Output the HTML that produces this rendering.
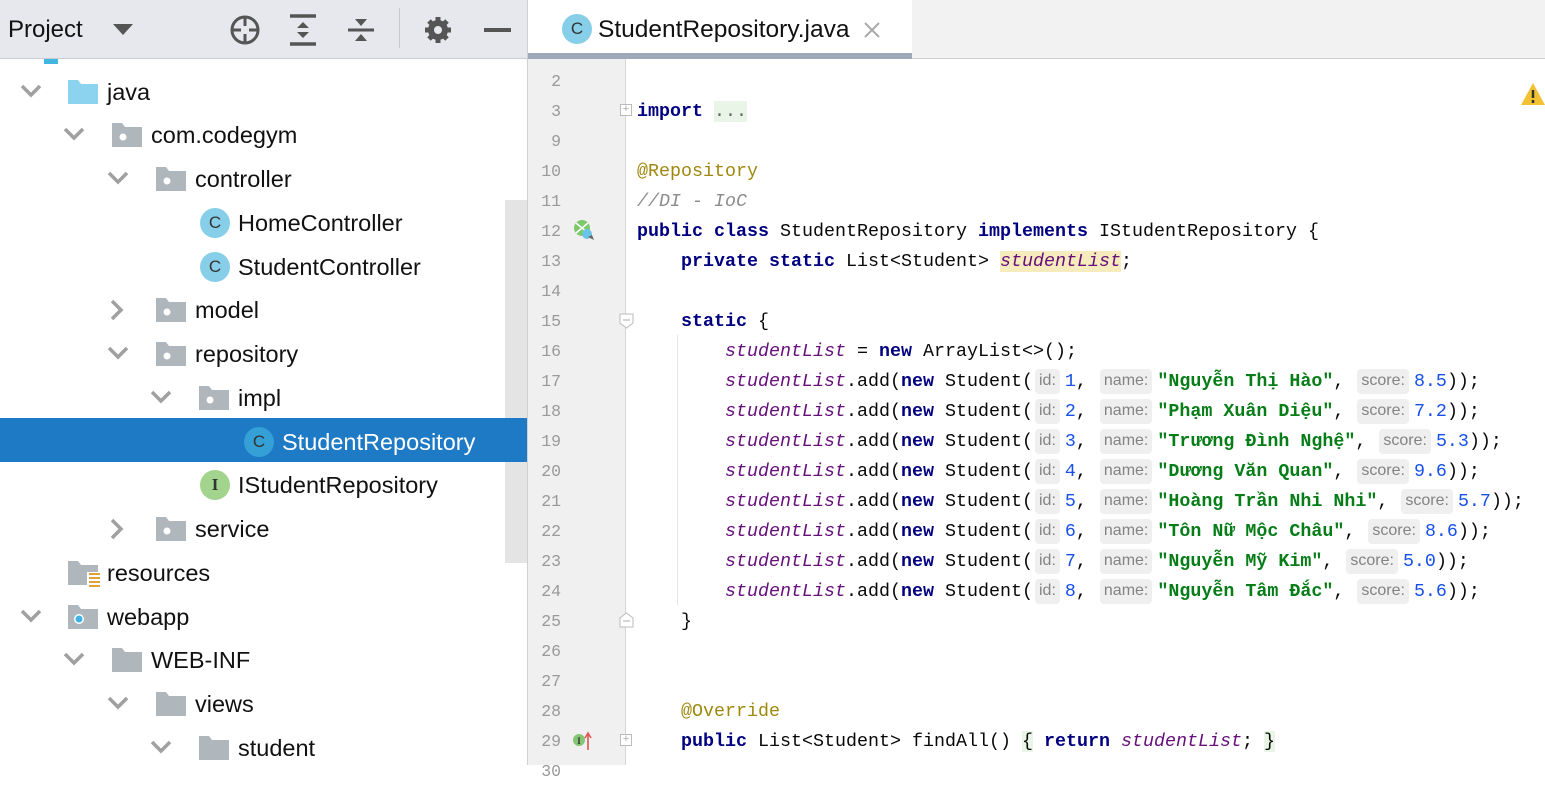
<!DOCTYPE html>
<html><head><meta charset="utf-8"><style>
*{margin:0;padding:0;box-sizing:border-box}
body{width:1545px;height:765px;overflow:hidden;background:#fff;position:relative;font-family:"Liberation Sans",sans-serif}
.abs{position:absolute}
#lh{left:0;top:0;width:528px;height:59px;background:#e6e8ee;border-bottom:1px solid #c9ccd3}
#lh .t{left:8px;top:16px;font-size:24px;color:#111}
.row{position:absolute;left:0;width:528px;height:44px;font-size:23.5px;color:#111;white-space:nowrap}
.row span.tx{position:absolute;top:9px}
.chev{position:absolute;top:14px}
.fold{position:absolute;top:10px;width:30px;height:24px}
.ci{position:absolute;top:7px;width:30px;height:30px;border-radius:50%;background:#87cfe9;color:#333;font-size:17px;text-align:center;line-height:30px;font-family:"Liberation Sans",sans-serif}
#tb{left:528px;top:0;width:1017px;height:59px;background:#f2f2f2;border-bottom:1px solid #d0d0d0}
#tab{left:528px;top:0;width:384px;height:59px;background:#fff;border-bottom:6px solid #9ea8b8}
#gut{left:528px;top:59px;width:98px;height:706px;background:#f0f0f0;border-right:1px solid #d6d6d6}
.ln{position:absolute;left:528px;width:33px;text-align:right;font-family:"Liberation Mono",monospace;font-size:16.5px;color:#999;height:30px;line-height:30px;margin-top:2px}
.cl{position:absolute;left:637px;height:30px;line-height:30px;font-family:"Liberation Mono",monospace;font-size:18.33px;color:#080808;white-space:pre;margin-top:2px}
.k{color:#000080;font-weight:bold}
.f{color:#660e7a;font-style:italic}
.s{color:#067d17;font-weight:bold}
.n{color:#1750eb}
.a{color:#9e880d}
.c{color:#8c8c8c;font-style:italic}
.h{display:inline-block;font-family:"Liberation Sans",sans-serif;font-size:16px;color:#838383;background:#efefef;border-radius:4px;padding:0 4px;line-height:24px;height:25px;vertical-align:1px;font-style:normal;font-weight:normal;margin-right:5px;margin-left:2px}
</style></head><body>
<div id="lh" class="abs"><div class="t abs">Project</div>
<svg class="abs" style="left:112px;top:22px" width="22" height="14"><path d="M1 2h20l-10 11z" fill="#555"/></svg>
<svg class="abs" style="left:229px;top:14px" width="34" height="34"><circle cx="16" cy="16" r="13" fill="none" stroke="#555" stroke-width="3"/><path d="M16 3v9M16 20v9M3 16h9M20 16h9" stroke="#555" stroke-width="3"/></svg>
<svg class="abs" style="left:288px;top:14px" width="30" height="32"><path d="M2 2h26M2 30h26" stroke="#555" stroke-width="3.5"/><path d="M9 14l6-6 6 6zM9 18l6 6 6-6z" fill="#555"/></svg>
<svg class="abs" style="left:346px;top:14px" width="30" height="32"><path d="M2 16h26" stroke="#555" stroke-width="3"/><path d="M9 5l6 7 6-7zM9 27l6-7 6 7z" fill="#555"/></svg>
<div class="abs" style="left:399px;top:8px;width:1px;height:40px;background:#c8c8c8"></div>
<svg class="abs" style="left:423px;top:15px" width="30" height="30" viewBox="0 0 30 30"><g fill="#555"><circle cx="15" cy="15" r="10"/><g stroke="#555" stroke-width="5"><path d="M15 2v26M2 15h26M6 6l18 18M24 6L6 24"/></g></g><circle cx="15" cy="15" r="4" fill="#e6e8ee"/></svg>
<div class="abs" style="left:484px;top:28px;width:27px;height:4px;background:#555"></div>
</div>
<div class="abs" style="left:44px;top:59px;width:14px;height:5px;background:#40b6e0"></div>

<div class="abs" style="left:505px;top:200px;width:22px;height:363px;background:#e4e4e4"></div>
<div class="row" style="top:418px;background:#1e7ac5;width:528px"></div>

<svg width="0" height="0" style="position:absolute"><defs>
<symbol id="dn" viewBox="0 0 22 14"><path d="M2 2l9 9 9-9" fill="none" stroke="#a0a0a0" stroke-width="3.5"/></symbol>
<symbol id="rt" viewBox="0 0 14 22"><path d="M2 2l9 9-9 9" fill="none" stroke="#a0a0a0" stroke-width="3.5"/></symbol>
<symbol id="pk" viewBox="0 0 30 24"><path d="M0 0h10l3 4h17v20H0z" fill="#afb6bc"/><circle cx="11" cy="14" r="3.5" fill="#fff"/></symbol>
<symbol id="fd" viewBox="0 0 30 24"><path d="M0 0h10l3 4h17v20H0z" fill="#afb6bc"/></symbol>
</defs></svg>

<div class="row" style="top:70px"><svg class="chev" style="left:20px" width="22" height="14"><use href="#dn"/></svg><svg class="fold" style="left:68px"><path d="M0 0h10l3 4h17v20H0z" fill="#8cd3ef"/></svg><span class="tx" style="left:107px">java</span></div>
<div class="row" style="top:113px"><svg class="chev" style="left:63px" width="22" height="14"><use href="#dn"/></svg><svg class="fold" style="left:112px"><use href="#pk"/></svg><span class="tx" style="left:151px">com.codegym</span></div>
<div class="row" style="top:157px"><svg class="chev" style="left:107px" width="22" height="14"><use href="#dn"/></svg><svg class="fold" style="left:156px"><use href="#pk"/></svg><span class="tx" style="left:195px">controller</span></div>
<div class="row" style="top:201px"><div class="ci" style="left:200px">C</div><span class="tx" style="left:238px">HomeController</span></div>
<div class="row" style="top:245px"><div class="ci" style="left:200px">C</div><span class="tx" style="left:238px">StudentController</span></div>
<div class="row" style="top:288px"><svg class="chev" style="left:110px;top:11px" width="14" height="22"><use href="#rt"/></svg><svg class="fold" style="left:156px"><use href="#pk"/></svg><span class="tx" style="left:195px">model</span></div>
<div class="row" style="top:332px"><svg class="chev" style="left:107px" width="22" height="14"><use href="#dn"/></svg><svg class="fold" style="left:156px"><use href="#pk"/></svg><span class="tx" style="left:195px">repository</span></div>
<div class="row" style="top:376px"><svg class="chev" style="left:150px" width="22" height="14"><use href="#dn"/></svg><svg class="fold" style="left:199px"><use href="#pk"/></svg><span class="tx" style="left:238px">impl</span></div>
<div class="row" style="top:420px;color:#fff"><div class="ci" style="left:244px;background:#34a0d6">C</div><span class="tx" style="left:282px">StudentRepository</span></div>
<div class="row" style="top:463px"><div class="ci" style="left:200px;background:#a2d48e;font-family:'Liberation Serif',serif;font-weight:bold">I</div><span class="tx" style="left:238px">IStudentRepository</span></div>
<div class="row" style="top:507px"><svg class="chev" style="left:110px;top:11px" width="14" height="22"><use href="#rt"/></svg><svg class="fold" style="left:156px"><use href="#pk"/></svg><span class="tx" style="left:195px">service</span></div>
<div class="row" style="top:551px"><svg class="fold" style="left:68px;width:34px;height:30px"><path d="M0 0h10l3 4h17v20H0z" fill="#afb6bc"/><rect x="19" y="11" width="13" height="17" fill="#fff"/><path d="M21 13h11M21 17h11M21 21h11M21 25h11" stroke="#e0a03a" stroke-width="2"/></svg><span class="tx" style="left:107px">resources</span></div>
<div class="row" style="top:595px"><svg class="chev" style="left:20px" width="22" height="14"><use href="#dn"/></svg><svg class="fold" style="left:68px"><path d="M0 0h10l3 4h17v20H0z" fill="#afb6bc"/><circle cx="11" cy="14" r="5" fill="#fff"/><circle cx="11" cy="14" r="3.5" fill="#3fb3e6"/></svg><span class="tx" style="left:107px">webapp</span></div>
<div class="row" style="top:638px"><svg class="chev" style="left:63px" width="22" height="14"><use href="#dn"/></svg><svg class="fold" style="left:112px"><use href="#fd"/></svg><span class="tx" style="left:151px">WEB-INF</span></div>
<div class="row" style="top:682px"><svg class="chev" style="left:107px" width="22" height="14"><use href="#dn"/></svg><svg class="fold" style="left:156px"><use href="#fd"/></svg><span class="tx" style="left:195px">views</span></div>
<div class="row" style="top:726px"><svg class="chev" style="left:150px" width="22" height="14"><use href="#dn"/></svg><svg class="fold" style="left:199px"><use href="#fd"/></svg><span class="tx" style="left:238px">student</span></div>

<div class="abs" style="left:527px;top:0;width:1px;height:765px;background:#d0d0d0"></div>

<div id="tb" class="abs"></div>
<div id="tab" class="abs">
<div class="ci" style="left:34px;top:14px">C</div>
<div class="abs" style="left:70px;top:16px;font-size:24.5px;color:#111">StudentRepository.java</div>
<svg class="abs" style="left:336px;top:22px" width="16" height="16"><path d="M1 1l14 14M15 1L1 15" stroke="#aaa" stroke-width="2"/></svg>
</div>

<div id="gut" class="abs"></div>
<div class="abs" style="left:677px;top:335px;width:1px;height:270px;background:#e6e6e6"></div>

<svg class="abs" style="left:1520px;top:82px" width="26" height="24"><path d="M13 1L25 23H1z" fill="#f2c232"/><path d="M13 8v8M13 18v3" stroke="#333" stroke-width="2.5"/></svg>

<svg class="abs" style="left:572px;top:219px" width="24" height="22"><circle cx="10" cy="9" r="8" fill="#7dc96c"/><path d="M4 4l12 10M16 4L4 14" stroke="#fff" stroke-width="1.5"/><circle cx="15" cy="15" r="5" fill="#6cc3e8"/><path d="M16 18l6 3-2-5z" fill="#666"/></svg>
<svg class="abs" style="left:573px;top:731px" width="24" height="20"><circle cx="6" cy="9" r="6" fill="#84c674"/><text x="6" y="13" font-size="9" text-anchor="middle" font-family="Liberation Serif" fill="#333" font-weight="bold">I</text><path d="M15 19V3M12 7l3-5 3 5" stroke="#e05555" stroke-width="1.6" fill="none"/></svg>
<div class="abs" style="left:620px;top:104px;width:12px;height:12px;border:1px solid #bbb;background:#fff;font-size:11px;line-height:9px;text-align:center;color:#aaa">+</div>
<div class="abs" style="left:620px;top:734px;width:12px;height:12px;border:1px solid #bbb;background:#fff;font-size:11px;line-height:9px;text-align:center;color:#aaa">+</div>
<svg class="abs" style="left:619px;top:313px" width="15" height="16"><path d="M1 1h13v9l-6.5 5L1 10z" fill="#fff" stroke="#bbb"/><path d="M4 7h7" stroke="#aaa"/></svg>
<svg class="abs" style="left:619px;top:612px" width="15" height="16"><path d="M1 15h13V6L7.5 1 1 6z" fill="#fff" stroke="#bbb"/><path d="M4 9h7" stroke="#aaa"/></svg>

<div class="ln" style="top:65px">2</div><div class="ln" style="top:95px">3</div><div class="ln" style="top:125px">9</div>
<div class="ln" style="top:155px">10</div><div class="ln" style="top:185px">11</div><div class="ln" style="top:215px">12</div>
<div class="ln" style="top:245px">13</div><div class="ln" style="top:275px">14</div><div class="ln" style="top:305px">15</div>
<div class="ln" style="top:335px">16</div><div class="ln" style="top:365px">17</div><div class="ln" style="top:395px">18</div>
<div class="ln" style="top:425px">19</div><div class="ln" style="top:455px">20</div><div class="ln" style="top:485px">21</div>
<div class="ln" style="top:515px">22</div><div class="ln" style="top:545px">23</div><div class="ln" style="top:575px">24</div>
<div class="ln" style="top:605px">25</div><div class="ln" style="top:635px">26</div><div class="ln" style="top:665px">27</div>
<div class="ln" style="top:695px">28</div><div class="ln" style="top:725px">29</div><div class="ln" style="top:755px">30</div>

<div class="cl" style="top:95px"><span class="k">import</span> <span style="background:#e9f5e6;color:#666">...</span></div>
<div class="cl a" style="top:155px">@Repository</div>
<div class="cl c" style="top:185px">//DI - IoC</div>
<div class="cl" style="top:215px"><span class="k">public class</span> StudentRepository <span class="k">implements</span> IStudentRepository {</div>
<div class="cl" style="top:245px">    <span class="k">private static</span> List&lt;Student&gt; <span class="f" style="background:#f6ebbc">studentList</span>;</div>
<div class="cl" style="top:305px">    <span class="k">static</span> {</div>
<div class="cl" style="top:335px">        <span class="f">studentList</span> = <span class="k">new</span> ArrayList&lt;&gt;();</div>
<div class="cl" style="top:365px">        <span class="f">studentList</span>.add(<span class="k">new</span> Student(<span class="h">id:</span><span class="n">1</span>, <span class="h">name:</span><span class="s">"Nguyễn Thị Hào"</span>, <span class="h">score:</span><span class="n">8.5</span>));</div>
<div class="cl" style="top:395px">        <span class="f">studentList</span>.add(<span class="k">new</span> Student(<span class="h">id:</span><span class="n">2</span>, <span class="h">name:</span><span class="s">"Phạm Xuân Diệu"</span>, <span class="h">score:</span><span class="n">7.2</span>));</div>
<div class="cl" style="top:425px">        <span class="f">studentList</span>.add(<span class="k">new</span> Student(<span class="h">id:</span><span class="n">3</span>, <span class="h">name:</span><span class="s">"Trương Đình Nghệ"</span>, <span class="h">score:</span><span class="n">5.3</span>));</div>
<div class="cl" style="top:455px">        <span class="f">studentList</span>.add(<span class="k">new</span> Student(<span class="h">id:</span><span class="n">4</span>, <span class="h">name:</span><span class="s">"Dương Văn Quan"</span>, <span class="h">score:</span><span class="n">9.6</span>));</div>
<div class="cl" style="top:485px">        <span class="f">studentList</span>.add(<span class="k">new</span> Student(<span class="h">id:</span><span class="n">5</span>, <span class="h">name:</span><span class="s">"Hoàng Trần Nhi Nhi"</span>, <span class="h">score:</span><span class="n">5.7</span>));</div>
<div class="cl" style="top:515px">        <span class="f">studentList</span>.add(<span class="k">new</span> Student(<span class="h">id:</span><span class="n">6</span>, <span class="h">name:</span><span class="s">"Tôn Nữ Mộc Châu"</span>, <span class="h">score:</span><span class="n">8.6</span>));</div>
<div class="cl" style="top:545px">        <span class="f">studentList</span>.add(<span class="k">new</span> Student(<span class="h">id:</span><span class="n">7</span>, <span class="h">name:</span><span class="s">"Nguyễn Mỹ Kim"</span>, <span class="h">score:</span><span class="n">5.0</span>));</div>
<div class="cl" style="top:575px">        <span class="f">studentList</span>.add(<span class="k">new</span> Student(<span class="h">id:</span><span class="n">8</span>, <span class="h">name:</span><span class="s">"Nguyễn Tâm Đắc"</span>, <span class="h">score:</span><span class="n">5.6</span>));</div>
<div class="cl" style="top:605px">    }</div>
<div class="cl a" style="top:695px">    @Override</div>
<div class="cl" style="top:725px">    <span class="k">public</span> List&lt;Student&gt; findAll() <span style="background:#e9f5e6">{</span> <span class="k">return</span> <span class="f">studentList</span>; <span style="background:#e9f5e6">}</span></div>
</body></html>
